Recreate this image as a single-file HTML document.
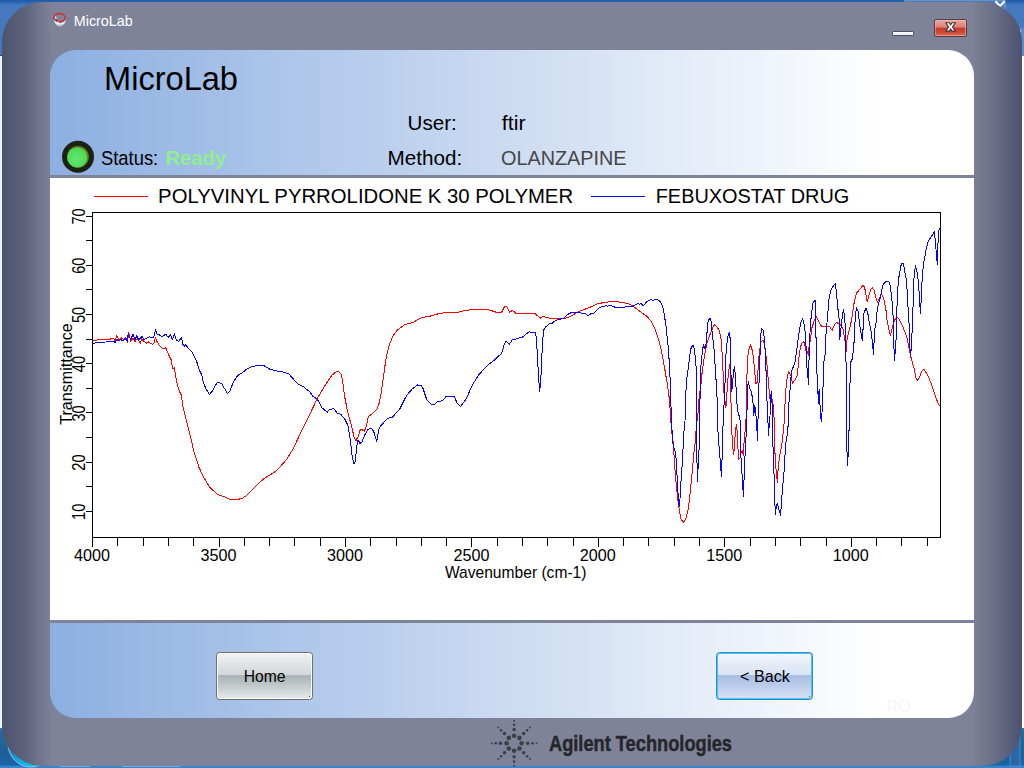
<!DOCTYPE html>
<html><head><meta charset="utf-8">
<style>
html,body{margin:0;padding:0;}
body{width:1024px;height:768px;overflow:hidden;position:relative;background:#3f73b8;font-family:"Liberation Sans",sans-serif;}
.abs{position:absolute;}
#desk-top{left:0;top:0;width:1024px;height:56px;background:linear-gradient(180deg,#1f5cab 0,#2563b0 2px,#4679bf 5px,#4478bd 55px,#1d3f73 55px);}
#desk-left{left:0;top:56px;width:14px;height:672px;background:#eef2fa;}
#desk-right{left:1010px;top:56px;width:14px;height:672px;background:#fdfdfe;}
#desk-bot{left:0;top:728px;width:1024px;height:40px;background:linear-gradient(180deg,#3a7db0 0,#27699e 3px,#1f5f97 24px,#1d63a5 37px,#2a84cf 38px,#2f8ad6 40px);}
#win{left:2px;top:2px;width:1020px;height:764px;border-radius:40px;background:linear-gradient(90deg,#4c536c 0,#5d627b 22px,#7f8399 50px,#7f8399 968px,#6a6f87 992px,#4b5270 1020px);}
#panel{left:50px;top:50px;width:924px;height:668px;border-radius:26px;background:linear-gradient(90deg,#8cb0e2 0,#8fb1e2 20px,#ffffff 830px);overflow:hidden;}
#chartbg{left:0;top:125px;width:924px;height:448px;background:#fff;border-top:3px solid #7f8399;border-bottom:3px solid #7f8399;box-sizing:border-box;}
.btn{box-sizing:border-box;border-radius:3.5px;}
#home{left:216px;top:652px;width:97px;height:48px;border:1px solid #6f6f6f;box-shadow:inset 0 0 0 1px #fafafa;background:linear-gradient(180deg,#f3f3f4 0,#e1e4e6 24%,#d3d7d9 47%,#aab4b8 49%,#b6bfc2 62%,#d0d6d6 82%,#e8eaea 100%);}
#back{left:716px;top:652px;width:97px;height:48px;border:1px solid #2b8dcd;box-shadow:inset 0 0 0 1px #43c4f1;background:linear-gradient(180deg,#f6f8fc 0,#e6ecf8 22%,#dbe4f4 47%,#a7bde2 49%,#b3c6e7 62%,#c6d4ee 82%,#d8e2f4 100%);}
#close{left:934px;top:19px;width:33px;height:18px;box-sizing:border-box;border:1px solid #4e3f48;border-radius:2px;box-shadow:inset 0 0 0 1px rgba(255,200,190,.45);background:linear-gradient(180deg,#eaa79f 0,#dc7f76 45%,#c93a29 50%,#cf4634 75%,#de6a58 100%);}
#min{left:892px;top:31px;width:22px;height:5px;box-sizing:border-box;border:1px solid #4d5066;border-radius:1.5px;background:linear-gradient(180deg,#ffffff,#e4e6ee);}
</style></head><body>
<div class="abs" id="desk-top"></div>
<div class="abs" id="desk-left"></div>
<div class="abs" id="desk-right"></div>
<div class="abs" id="desk-bot"></div>
<svg class="abs" style="left:0;top:0" width="1024" height="768" viewBox="0 0 1024 768">
<defs><radialGradient id="orb" cx="0.55" cy="0.75" r="0.7"><stop offset="0" stop-color="#12e0ff"/><stop offset="0.6" stop-color="#0a9fdc"/><stop offset="1" stop-color="#1467a8"/></radialGradient></defs>
<!-- background window bits behind the rounded corners -->
<path d="M905,0 h100 v8 q0,4 -4,4 h-92 q-4,0 -4,-4 z" fill="#4a7ab8" stroke="#86a9d6" stroke-width="1"/>
<path d="M995.5,1.2 l4.5,5 4.5,-5" fill="none" stroke="#fff" stroke-width="2.2"/>
<rect x="1009" y="28" width="15" height="28" fill="#5f8cc6"/>
<rect x="1012" y="30" width="9" height="22" fill="#c9d6ea"/>
<circle cx="31" cy="744" r="23" fill="url(#orb)" stroke="#9fd8f2" stroke-width="0.8"/>
<rect x="1010" y="728" width="10" height="38" fill="#2b67a6" stroke="#5f8fc4" stroke-width="0.8"/>
<rect x="60" y="765.6" width="30" height="1" fill="#9cc3e2"/><rect x="122" y="765.6" width="58" height="1" fill="#9cc3e2"/>
</svg>
<div class="abs" id="win"></div>
<div class="abs" id="panel"><div class="abs" id="chartbg"></div></div>
<div class="abs btn" id="home"></div>
<div class="abs btn" id="back"></div>
<div class="abs" id="close"></div>
<div class="abs" id="min"></div>
<svg class="abs" id="ui" style="left:0;top:0" width="1024" height="768" viewBox="0 0 1024 768" font-family="Liberation Sans, sans-serif">
<defs>
<radialGradient id="led" cx="0.45" cy="0.55" r="0.6"><stop offset="0" stop-color="#62e474"/><stop offset="0.7" stop-color="#4fde5a"/><stop offset="1" stop-color="#44d84a"/></radialGradient>
<linearGradient id="icn" x1="0" y1="0" x2="0" y2="1"><stop offset="0" stop-color="#c9ccd6"/><stop offset="0.5" stop-color="#eeeff3"/><stop offset="1" stop-color="#a4a7b6"/></linearGradient>
</defs>
<g><path d="M54,19.6 Q54.2,24.4 59.4,26.9 Q65.2,25.4 66,19.6 Q63.2,23.6 59.4,22.8 Q56,21.6 54,19.6 Z" fill="url(#icn)"/><path d="M55.6,16.4 Q55.2,19.6 57.8,22.2" fill="none" stroke="#e6e8ee" stroke-width="1.3"/><path d="M54.3,19.3 A5.5,4.1 0 0 1 59.4,13.5 A5.5,4.1 0 0 1 64.9,17.6 A5.5,4.1 0 0 1 59.8,21.7 Q58.6,21.5 58,20.7" fill="none" stroke="#de2a2e" stroke-width="1.5" stroke-linecap="round"/><ellipse cx="56.2" cy="20.4" rx="0.8" ry="1.4" fill="#1a2438" transform="rotate(-20 56.2 20.4)"/></g>
<text x="73.8" y="25.6" font-size="14.1" fill="#fff" textLength="58.8" lengthAdjust="spacingAndGlyphs">MicroLab</text>
<path d="M945.7,22.7 L949.2,22.7 L950.6,24.9 L952,22.7 L955.5,22.7 L952.5,26.9 L955.5,31.1 L952,31.1 L950.6,28.9 L949.2,31.1 L945.7,31.1 L948.7,26.9 Z" fill="#fff" stroke="#43343c" stroke-width="1.1" stroke-linejoin="round"/>
<text x="104" y="89.6" font-size="33.6" textLength="134" lengthAdjust="spacingAndGlyphs">MicroLab</text>
<text x="407.6" y="129.8" font-size="20.3" textLength="49.2" lengthAdjust="spacingAndGlyphs">User:</text>
<text x="501.8" y="129.8" font-size="20.3" textLength="23.8" lengthAdjust="spacingAndGlyphs">ftir</text>
<text x="387.6" y="164.8" font-size="20.3" textLength="74.6" lengthAdjust="spacingAndGlyphs">Method:</text>
<text x="501" y="164.8" font-size="20.3" fill="#464646" textLength="125.6" lengthAdjust="spacingAndGlyphs">OLANZAPINE</text>
<text x="101" y="164.7" font-size="19.3" textLength="57.2" lengthAdjust="spacingAndGlyphs">Status:</text>
<text x="165.4" y="164.7" font-size="19.3" font-weight="bold" fill="#90ee90" textLength="60.8" lengthAdjust="spacingAndGlyphs">Ready</text>
<circle cx="78" cy="156.8" r="16" fill="#1b2213"/><circle cx="77.9" cy="156.9" r="10.9" fill="#6d7f1e"/><circle cx="77.2" cy="157.4" r="10" fill="url(#led)"/>
<text x="264.6" y="682" font-size="16.2" text-anchor="middle" textLength="41.8" lengthAdjust="spacingAndGlyphs">Home</text>
<text x="764.9" y="682" font-size="16.2" text-anchor="middle" textLength="49.8" lengthAdjust="spacingAndGlyphs">&lt; Back</text>
<rect x="309" y="696" width="1" height="1" fill="#555"/><rect x="809" y="696" width="1" height="1" fill="#555"/>
<text x="886.6" y="712" font-size="16" fill="#f7f5f5" textLength="24" lengthAdjust="spacingAndGlyphs">RO</text>
<text x="549" y="750.6" font-size="21.3" font-weight="bold" fill="#26262a" stroke="#26262a" stroke-width="0.45" textLength="183" lengthAdjust="spacingAndGlyphs">Agilent Technologies</text>
<g fill="#3e3e44"><circle cx="521.6" cy="743.2" r="2.30"/><circle cx="527.7" cy="743.2" r="1.75"/><circle cx="532.5" cy="743.2" r="1.30"/><circle cx="536.5" cy="743.2" r="0.95"/><circle cx="519.4" cy="748.5" r="2.30"/><circle cx="523.7" cy="752.8" r="1.75"/><circle cx="527.1" cy="756.2" r="1.30"/><circle cx="529.9" cy="759.0" r="0.95"/><circle cx="514.1" cy="750.8" r="2.30"/><circle cx="514.1" cy="756.8" r="1.75"/><circle cx="514.1" cy="761.6" r="1.30"/><circle cx="514.1" cy="765.6" r="0.95"/><circle cx="508.8" cy="748.5" r="2.30"/><circle cx="504.5" cy="752.8" r="1.75"/><circle cx="501.1" cy="756.2" r="1.30"/><circle cx="498.3" cy="759.0" r="0.95"/><circle cx="506.6" cy="743.2" r="2.30"/><circle cx="500.5" cy="743.2" r="1.75"/><circle cx="495.7" cy="743.2" r="1.30"/><circle cx="491.7" cy="743.2" r="0.95"/><circle cx="508.8" cy="737.9" r="2.30"/><circle cx="504.5" cy="733.6" r="1.75"/><circle cx="501.1" cy="730.2" r="1.30"/><circle cx="498.3" cy="727.4" r="0.95"/><circle cx="514.1" cy="735.7" r="2.30"/><circle cx="514.1" cy="729.6" r="1.75"/><circle cx="514.1" cy="724.8" r="1.30"/><circle cx="514.1" cy="720.8" r="0.95"/><circle cx="519.4" cy="737.9" r="2.30"/><circle cx="523.7" cy="733.6" r="1.75"/><circle cx="527.1" cy="730.2" r="1.30"/><circle cx="529.9" cy="727.4" r="0.95"/></g>
</svg>
<svg class="abs" id="chart" style="left:0;top:0" width="1024" height="768" viewBox="0 0 1024 768" font-family="Liberation Sans, sans-serif">
<line x1="94" y1="196.5" x2="148" y2="196.5" stroke="#f00" stroke-width="1" shape-rendering="crispEdges"/>
<line x1="591" y1="196.5" x2="645" y2="196.5" stroke="#00f" stroke-width="1" shape-rendering="crispEdges"/>
<text x="158.1" y="202.8" font-size="20.1" textLength="415" lengthAdjust="spacingAndGlyphs">POLYVINYL PYRROLIDONE K 30 POLYMER</text>
<text x="655.7" y="202.8" font-size="20.1" textLength="193.6" lengthAdjust="spacingAndGlyphs">FEBUXOSTAT DRUG</text>
<g fill="none" stroke-linejoin="round" stroke-width="1" shape-rendering="crispEdges">
<path stroke="#f00" d="M92.8,340.5 L99.4,339.7 L105.6,339.7 L113.4,338.6 L115.0,340.5 L116.9,335.8 L118.9,339.7 L121.3,337.8 L123.6,339.7 L125.9,337.8 L127.5,342.0 L128.6,332.7 L130.9,341.3 L133.0,338.1 L135.0,342.0 L136.9,338.9 L138.4,340.5 L140.3,343.1 L141.6,338.9 L143.9,341.3 L146.3,343.1 L148.6,342.0 L150.9,343.6 L152.5,344.4 L154.0,342.8 L155.3,337.8 L157.2,342.0 L160.3,346.7 L163.4,348.8 L165.5,347.5 L167.3,351.4 L168.9,355.3 L171.2,360.0 L172.8,369.0 L174.4,367.8 L175.6,375.6 L177.5,385.0 L179.4,391.2 L181.4,395.2 L183.0,406.9 L185.6,417.8 L187.2,423.4 L191.1,439.0 L193.4,450.0 L198.9,467.2 L203.6,477.3 L209.8,487.5 L217.7,494.5 L223.9,496.6 L229.4,499.2 L238.8,499.2 L242.7,498.1 L247.3,495.0 L255.9,485.9 L264.5,478.1 L270.0,475.0 L277.0,470.3 L282.5,464.1 L287.2,458.6 L293.4,448.4 L302.8,428.1 L310.6,412.5 L318.1,396.9 L325.2,385.2 L331.4,375.8 L335.3,372.2 L338.1,371.1 L340.8,373.4 L342.3,378.9 L344.7,396.9 L347.8,412.5 L351.7,426.6 L354.1,437.5 L355.9,440.6 L358.0,436.7 L360.3,429.7 L361.9,429.4 L364.2,431.2 L365.8,428.1 L368.4,416.4 L372.8,413.3 L376.7,409.4 L379.5,402.3 L381.5,391.0 L383.4,377.0 L385.5,362.0 L387.5,351.5 L390.0,343.0 L393.3,335.3 L397.2,330.3 L405.0,324.4 L412.8,322.5 L421.4,317.8 L431.6,315.8 L439.4,313.4 L450.3,312.2 L458.1,312.2 L465.9,310.3 L475.3,309.5 L487.8,309.5 L496.4,312.3 L501.6,312.3 L504.2,307.2 L506.2,306.1 L508.1,308.8 L509.7,312.2 L512.5,310.3 L515.9,313.4 L534.8,313.3 L540.3,318.3 L542.7,316.2 L549.7,318.3 L557.5,318.3 L563.0,319.0 L570.0,316.7 L579.4,311.2 L588.8,307.8 L596.6,304.2 L604.4,302.3 L613.0,301.6 L623.1,302.3 L630.9,304.7 L638.8,310.5 L647.3,316.7 L651.2,321.4 L655.2,329.2 L658.3,338.6 L661.4,350.3 L664.5,367.5 L667.5,385.3 L669.4,399.4 L670.2,410.0 L671.4,428.8 L673.4,444.4 L674.5,463.1 L675.8,480.3 L676.9,491.2 L678.4,503.8 L679.7,513.1 L681.2,519.4 L683.4,522.2 L685.5,519.4 L687.8,511.6 L689.7,497.5 L690.9,485.0 L692.5,469.4 L693.8,453.8 L695.3,441.2 L696.4,425.6 L698.0,413.1 L699.2,396.2 L701.1,383.8 L701.9,374.4 L704.2,357.2 L707.3,341.6 L711.2,331.4 L713.6,326.0 L714.7,324.4 L716.7,326.7 L719.4,330.6 L721.4,341.6 L722.3,357.2 L723.1,372.8 L723.4,387.7 L724.7,399.4 L725.9,407.2 L726.6,399.4 L727.5,383.8 L728.6,371.2 L729.7,364.7 L730.3,372.8 L730.6,396.2 L731.4,410.0 L731.7,430.3 L732.8,446.7 L733.6,454.5 L734.4,446.7 L735.3,431.9 L736.4,424.4 L737.2,431.9 L738.0,449.0 L738.8,459.2 L740.3,457.7 L741.1,452.2 L742.2,450.6 L743.4,456.0 L744.2,439.7 L745.3,428.8 L746.2,416.2 L746.6,388.4 L747.3,363.4 L748.4,351.0 L750.5,345.0 L752.0,349.4 L753.6,358.8 L755.2,377.5 L755.9,383.4 L757.5,382.2 L758.3,363.4 L759.4,351.7 L760.9,342.3 L763.0,340.0 L763.8,341.6 L765.3,351.0 L766.6,360.3 L767.7,372.8 L768.8,386.9 L770.0,399.4 L771.6,402.5 L772.3,399.4 L773.4,406.4 L773.9,410.0 L774.4,441.2 L775.5,463.1 L776.6,475.6 L777.5,482.7 L778.1,469.4 L779.7,455.3 L781.7,446.0 L783.3,431.9 L784.4,419.4 L784.8,410.0 L785.3,396.2 L786.4,383.8 L787.5,375.2 L788.8,371.2 L790.3,374.4 L791.6,377.8 L792.3,383.3 L794.7,380.2 L797.0,376.2 L798.1,366.9 L799.1,355.9 L800.6,346.6 L802.2,342.2 L803.8,341.9 L804.8,345.0 L805.9,350.5 L807.2,351.2 L808.4,355.9 L808.8,349.7 L809.5,341.1 L810.3,341.1 L811.1,334.0 L811.9,327.8 L814.2,320.8 L816.2,316.1 L818.1,320.0 L820.5,325.5 L822.8,326.6 L825.9,327.0 L829.1,325.9 L830.9,328.6 L832.2,330.2 L834.5,324.7 L836.6,322.3 L838.8,323.9 L841.2,325.5 L843.1,329.4 L844.7,338.8 L845.9,348.1 L846.2,351.2 L847.0,340.3 L848.6,332.5 L850.9,323.1 L852.5,313.8 L854.1,302.8 L856.4,293.4 L859.5,289.5 L862.2,286.4 L863.6,285.2 L865.0,289.5 L867.2,301.7 L868.9,295.3 L870.8,289.5 L872.2,287.4 L874.0,290.3 L875.8,297.4 L877.5,302.4 L879.4,298.1 L881.2,294.6 L882.6,295.3 L884.4,301.0 L886.1,311.0 L887.2,321.5 L889.4,331.5 L890.4,335.8 L892.2,328.6 L894.4,320.0 L897.0,317.2 L899.4,319.3 L903.0,327.2 L906.6,336.5 L908.7,345.8 L910.2,354.4 L912.3,362.3 L914.5,370.2 L915.9,377.4 L917.3,380.5 L919.1,378.1 L921.4,371.9 L923.8,369.1 L927.4,374.5 L931.0,383.1 L934.5,393.1 L937.4,401.7 L939.6,405.8"/>
<path stroke="#00f" d="M92.8,343.3 L99.4,342.5 L105.6,342.0 L113.4,341.2 L115.0,342.5 L116.6,339.7 L118.9,340.5 L121.2,339.7 L123.1,341.2 L125.2,338.1 L127.2,341.2 L128.3,333.4 L130.6,339.7 L133.0,334.2 L135.0,339.7 L136.9,335.8 L138.8,340.5 L140.3,338.1 L142.3,336.2 L143.9,339.7 L146.2,338.4 L149.4,336.9 L153.3,337.3 L154.4,335.0 L155.6,330.0 L157.2,334.2 L159.5,335.0 L161.9,336.6 L165.8,334.2 L168.1,337.3 L170.5,335.0 L172.5,339.7 L174.4,333.4 L176.2,340.0 L178.8,341.2 L181.4,337.3 L183.0,344.4 L184.5,346.2 L185.6,344.4 L187.7,347.5 L191.6,351.4 L196.2,360.0 L199.4,370.2 L201.7,374.8 L203.3,382.7 L206.4,389.7 L209.5,394.4 L212.7,390.5 L216.6,383.4 L218.9,382.2 L222.0,384.2 L225.2,389.7 L227.5,393.6 L229.8,391.2 L233.8,381.1 L237.7,375.6 L243.1,372.2 L246.2,369.5 L252.5,366.4 L258.8,365.3 L264.2,365.9 L269.7,369.2 L277.5,371.1 L282.2,371.6 L289.2,374.2 L293.9,379.7 L298.6,384.4 L303.3,386.7 L309.5,391.4 L312.7,396.1 L317.3,399.2 L322.0,407.8 L327.2,412.2 L329.4,409.4 L333.8,408.6 L336.9,412.8 L340.8,414.4 L344.7,418.8 L347.8,425.0 L350.2,439.0 L352.2,456.2 L353.8,464.0 L355.3,461.7 L356.9,445.3 L358.1,439.8 L360.0,443.4 L361.9,442.2 L365.0,434.4 L368.1,429.4 L371.2,428.1 L373.6,431.2 L376.7,441.4 L379.0,428.9 L381.4,425.0 L387.7,418.4 L392.3,417.2 L399.5,409.5 L406.6,395.5 L412.0,389.2 L417.5,385.0 L420.9,385.3 L423.0,388.4 L426.9,400.2 L431.6,404.4 L434.7,404.4 L437.8,401.2 L442.5,400.9 L446.4,396.2 L451.1,397.0 L454.2,396.6 L457.3,403.3 L460.5,406.4 L465.9,399.4 L472.2,385.3 L478.4,375.2 L487.8,365.0 L494.1,360.3 L501.6,353.3 L504.2,344.7 L506.2,341.2 L509.4,344.4 L512.0,340.0 L522.2,337.2 L529.4,331.6 L530.9,332.3 L535.3,332.3 L536.4,337.8 L537.5,358.1 L538.8,380.0 L539.5,391.2 L540.3,387.0 L541.1,373.8 L541.9,355.0 L543.4,330.3 L545.8,326.9 L549.7,323.4 L552.0,323.4 L555.2,320.6 L560.6,319.0 L563.8,318.3 L567.7,314.4 L571.6,312.5 L579.4,312.5 L581.7,313.3 L584.8,313.3 L588.0,315.6 L591.1,313.6 L593.4,313.3 L599.7,307.3 L604.4,306.2 L605.9,305.3 L607.5,306.2 L609.8,305.3 L615.3,307.3 L623.9,307.3 L626.2,306.6 L633.3,306.2 L638.0,303.4 L639.5,304.2 L641.1,303.4 L642.7,305.3 L644.2,305.0 L646.6,301.6 L648.1,301.1 L650.5,299.5 L652.8,300.3 L657.2,299.2 L659.8,301.1 L661.9,304.2 L663.8,311.2 L666.1,326.9 L668.4,348.8 L669.7,369.0 L670.6,391.6 L671.1,410.0 L671.9,428.8 L673.0,444.4 L675.3,452.2 L676.6,463.1 L677.2,480.3 L678.4,499.0 L679.2,506.9 L680.0,499.0 L680.8,483.4 L681.9,469.4 L683.1,447.5 L683.9,431.9 L685.0,420.9 L685.5,410.0 L686.2,383.8 L688.6,365.0 L690.6,349.4 L692.5,345.5 L693.8,346.0 L695.3,357.2 L696.4,371.2 L696.7,410.0 L696.9,452.2 L697.2,481.9 L698.0,470.9 L698.4,450.6 L699.5,449.0 L699.8,425.6 L700.0,400.0 L700.3,372.8 L701.6,358.8 L702.7,348.6 L703.8,344.7 L704.7,349.0 L705.8,346.2 L706.9,333.8 L708.1,321.2 L710.0,317.8 L710.9,319.7 L712.0,330.6 L714.1,349.4 L715.9,377.5 L717.5,405.6 L718.0,431.9 L719.1,447.5 L720.3,461.6 L721.4,476.4 L721.9,464.7 L722.5,442.8 L723.4,413.1 L724.4,400.0 L725.0,383.8 L726.2,349.4 L727.8,336.9 L729.4,332.2 L730.5,341.6 L730.9,365.0 L731.2,391.6 L732.2,388.4 L733.3,374.4 L734.4,366.2 L735.3,374.4 L735.9,385.3 L736.9,402.5 L737.5,410.0 L738.8,414.7 L740.0,419.4 L740.6,438.1 L741.1,461.6 L741.9,472.5 L742.7,485.0 L743.4,496.2 L743.9,483.4 L744.7,461.6 L745.8,441.2 L746.9,417.8 L747.3,390.0 L748.4,381.4 L749.7,388.4 L751.2,391.6 L752.8,399.4 L753.7,416.0 L754.7,405.6 L755.6,410.0 L756.7,425.6 L757.5,440.5 L757.8,425.6 L758.3,410.0 L758.8,391.6 L759.4,368.1 L760.3,349.4 L760.9,333.8 L761.7,328.3 L763.4,330.6 L764.5,340.0 L765.3,352.5 L766.1,372.8 L766.9,399.4 L767.7,410.0 L768.0,422.5 L768.4,435.8 L769.2,425.6 L770.0,416.2 L770.6,400.0 L771.2,391.6 L772.0,402.5 L772.5,415.0 L772.8,441.2 L773.9,469.4 L774.7,500.6 L775.5,514.7 L776.2,506.9 L777.2,503.4 L778.6,508.4 L780.6,515.5 L781.7,499.0 L782.8,485.0 L784.1,470.9 L785.6,444.4 L787.2,435.0 L788.4,422.5 L788.8,410.0 L789.1,399.4 L790.0,390.0 L790.8,379.4 L791.9,370.0 L794.7,363.8 L797.0,348.1 L798.6,335.6 L800.6,323.1 L802.5,318.4 L804.1,324.7 L805.3,332.5 L806.1,348.1 L806.9,366.9 L808.0,377.8 L808.4,384.5 L808.8,366.9 L809.5,343.4 L810.3,326.2 L811.6,312.2 L813.1,302.8 L815.0,300.2 L815.5,309.0 L815.8,327.8 L816.6,363.8 L817.5,385.0 L817.8,389.4 L818.4,403.4 L819.1,389.4 L819.7,398.8 L820.5,413.6 L821.2,421.4 L822.0,413.6 L822.5,391.7 L823.3,385.0 L823.6,363.8 L825.6,351.2 L825.9,335.6 L827.5,316.9 L829.1,298.1 L831.4,288.8 L835.3,283.3 L836.6,293.4 L837.7,309.0 L838.8,310.6 L839.2,324.7 L839.7,339.5 L840.8,329.4 L842.3,316.9 L843.4,309.0 L844.7,316.9 L845.5,332.5 L845.9,351.2 L846.2,380.0 L846.6,432.3 L847.3,465.2 L848.3,453.4 L848.6,430.8 L849.7,430.0 L849.8,391.0 L850.6,362.2 L852.2,359.0 L853.8,348.1 L854.4,332.5 L855.3,316.9 L856.4,307.2 L858.0,311.4 L859.5,323.1 L861.1,334.0 L862.2,340.5 L862.9,331.5 L864.0,313.0 L866.0,308.2 L867.9,313.9 L869.7,325.0 L871.2,331.5 L872.6,344.4 L873.6,354.7 L874.0,343.0 L874.6,330.0 L876.3,322.0 L877.2,309.6 L880.1,298.1 L882.9,285.2 L885.1,282.1 L888.7,281.2 L890.1,285.2 L891.8,298.1 L893.2,317.2 L893.7,338.7 L894.4,360.5 L895.1,353.0 L895.8,343.7 L896.5,330.0 L897.0,306.7 L897.6,289.5 L899.0,276.6 L900.9,265.9 L901.9,263.0 L903.3,263.7 L904.7,270.9 L906.2,279.5 L907.3,292.4 L908.0,306.7 L908.7,317.2 L909.5,331.5 L909.9,347.3 L910.5,355.2 L911.3,348.7 L911.9,335.8 L912.8,315.3 L913.3,295.3 L914.2,273.8 L915.5,265.9 L916.6,269.5 L918.1,279.5 L919.1,292.4 L919.9,305.3 L920.5,313.2 L920.9,305.3 L921.6,291.0 L922.4,273.8 L923.8,262.3 L925.9,250.8 L928.1,241.5 L931.0,237.2 L934.3,231.5 L935.3,240.8 L936.0,249.4 L936.7,258.0 L937.4,264.5 L937.7,249.4 L938.6,232.2 L939.6,227.9"/>
</g>
<rect x="92.5" y="212.5" width="848.0" height="325.0" fill="none" stroke="#000" stroke-width="1" shape-rendering="crispEdges"/>
<path d="M92.5,537.5 v9.5 M117.5,537.5 v8.0 M143.5,537.5 v8.0 M168.5,537.5 v8.0 M193.5,537.5 v8.0 M219.5,537.5 v9.5 M244.5,537.5 v8.0 M269.5,537.5 v8.0 M294.5,537.5 v8.0 M320.5,537.5 v8.0 M345.5,537.5 v9.5 M370.5,537.5 v8.0 M396.5,537.5 v8.0 M421.5,537.5 v8.0 M446.5,537.5 v8.0 M471.5,537.5 v9.5 M497.5,537.5 v8.0 M522.5,537.5 v8.0 M547.5,537.5 v8.0 M573.5,537.5 v8.0 M598.5,537.5 v9.5 M623.5,537.5 v8.0 M648.5,537.5 v8.0 M674.5,537.5 v8.0 M699.5,537.5 v8.0 M724.5,537.5 v9.5 M750.5,537.5 v8.0 M775.5,537.5 v8.0 M800.5,537.5 v8.0 M826.5,537.5 v8.0 M851.5,537.5 v9.5 M876.5,537.5 v8.0 M901.5,537.5 v8.0 M927.5,537.5 v8.0 M92.5,511.5 h-7 M92.5,486.5 h-7 M92.5,462.5 h-7 M92.5,437.5 h-7 M92.5,412.5 h-7 M92.5,388.5 h-7 M92.5,363.5 h-7 M92.5,339.5 h-7 M92.5,314.5 h-7 M92.5,289.5 h-7 M92.5,265.5 h-7 M92.5,240.5 h-7 M92.5,216.5 h-7" stroke="#000" stroke-width="1" fill="none" shape-rendering="crispEdges"/>
<text x="92.0" y="561" font-size="16.6" text-anchor="middle" textLength="36" lengthAdjust="spacingAndGlyphs">4000</text>
<text x="218.5" y="561" font-size="16.6" text-anchor="middle" textLength="36" lengthAdjust="spacingAndGlyphs">3500</text>
<text x="344.9" y="561" font-size="16.6" text-anchor="middle" textLength="36" lengthAdjust="spacingAndGlyphs">3000</text>
<text x="471.4" y="561" font-size="16.6" text-anchor="middle" textLength="36" lengthAdjust="spacingAndGlyphs">2500</text>
<text x="597.8" y="561" font-size="16.6" text-anchor="middle" textLength="36" lengthAdjust="spacingAndGlyphs">2000</text>
<text x="724.2" y="561" font-size="16.6" text-anchor="middle" textLength="36" lengthAdjust="spacingAndGlyphs">1500</text>
<text x="850.7" y="561" font-size="16.6" text-anchor="middle" textLength="36" lengthAdjust="spacingAndGlyphs">1000</text>
<text transform="translate(85.3,511.8) rotate(-90)" font-size="17.6" text-anchor="middle" textLength="16.2" lengthAdjust="spacingAndGlyphs">10</text>
<text transform="translate(85.3,462.6) rotate(-90)" font-size="17.6" text-anchor="middle" textLength="16.2" lengthAdjust="spacingAndGlyphs">20</text>
<text transform="translate(85.3,413.4) rotate(-90)" font-size="17.6" text-anchor="middle" textLength="16.2" lengthAdjust="spacingAndGlyphs">30</text>
<text transform="translate(85.3,364.1) rotate(-90)" font-size="17.6" text-anchor="middle" textLength="16.2" lengthAdjust="spacingAndGlyphs">40</text>
<text transform="translate(85.3,314.9) rotate(-90)" font-size="17.6" text-anchor="middle" textLength="16.2" lengthAdjust="spacingAndGlyphs">50</text>
<text transform="translate(85.3,265.7) rotate(-90)" font-size="17.6" text-anchor="middle" textLength="16.2" lengthAdjust="spacingAndGlyphs">60</text>
<text transform="translate(85.3,216.5) rotate(-90)" font-size="17.6" text-anchor="middle" textLength="16.2" lengthAdjust="spacingAndGlyphs">70</text>
<text x="515.7" y="578.4" font-size="15.9" text-anchor="middle" textLength="141.6" lengthAdjust="spacingAndGlyphs">Wavenumber (cm-1)</text>
<text transform="translate(71.9,374) rotate(-90)" font-size="16.6" text-anchor="middle" textLength="101.5" lengthAdjust="spacingAndGlyphs">Transmittance</text>
</svg>
</body></html>
